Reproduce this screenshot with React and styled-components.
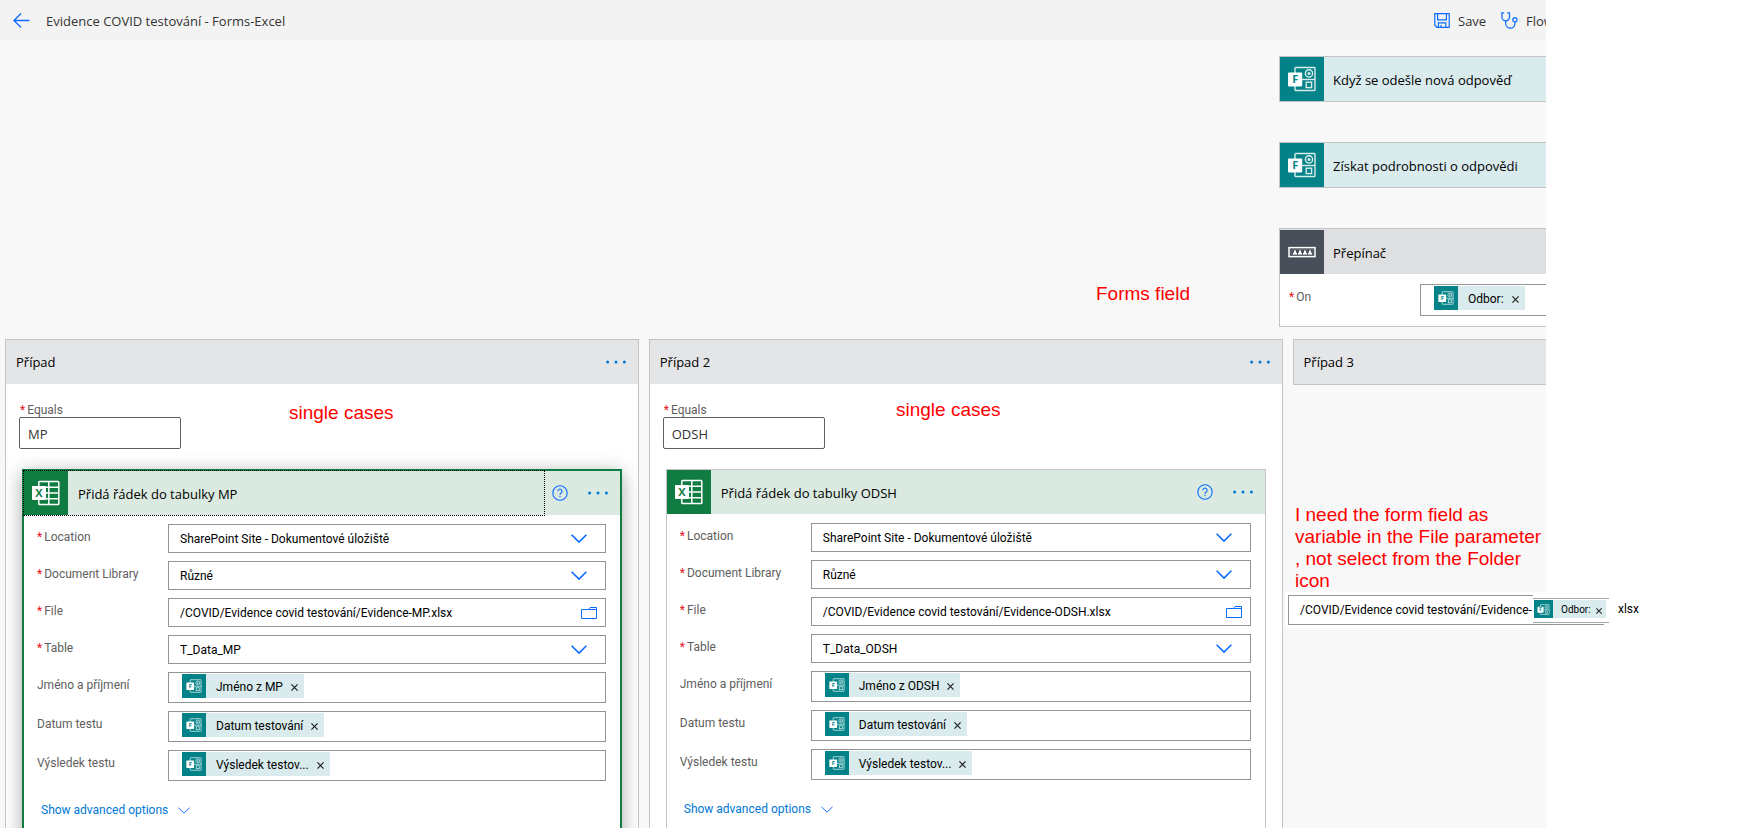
import React, { useState } from "react";
import styled, { createGlobalStyle, css } from "styled-components";

const color = {
  toolbar: "#f3f3f3",
  canvas: "#f8f8f8",
  line: "#c4c4c4",
  field: "#949494",
  text: "#000000",
  label: "#605e5c",
  blue: "#0a6cff",
  link: "#0078d4",
  teal: "#038387",
  tealLight: "#d9ebed",
  green: "#107c41",
  greenLight: "#dbeae0",
};

const cases = [
  {
    id: "mp",
    title: "Případ",
    value: "MP",
    action: "Přidá řádek do tabulky MP",
    file: "/COVID/Evidence covid testování/Evidence-MP.xlsx",
    table: "T_Data_MP",
    person: "Jméno z MP",
    selected: true,
  },
  {
    id: "odsh",
    title: "Případ 2",
    value: "ODSH",
    action: "Přidá řádek do tabulky ODSH",
    file: "/COVID/Evidence covid testování/Evidence-ODSH.xlsx",
    table: "T_Data_ODSH",
    person: "Jméno z ODSH",
    selected: false,
  },
];

const notes = [
  { id: 1, left: 1096, top: 283, text: "Forms field" },
  { id: 2, left: 289, top: 402, text: "single cases" },
  { id: 3, left: 896, top: 399, text: "single cases" },
  {
    id: 4,
    left: 1295,
    top: 504,
    text: "I need the form field as\nvariable in the File parameter\n, not select from the Folder\nicon",
  },
];

/* icons */
const FormsIcon = ({ size = 44 }) => (
  <svg width={size} height={size} viewBox="0 0 44 44" aria-hidden="true">
    <g fill="none" stroke="#d7ecec" strokeWidth="1.4">
      <rect x="15" y="10.5" width="20" height="23" rx="0.8" />
      <path d="M22 22.5h13" />
      <circle cx="29" cy="16.4" r="3.6" />
      <rect x="26.2" y="25.2" width="5.4" height="5.4" />
    </g>
    <circle cx="29" cy="16.4" r="1.5" fill="#d7ecec" />
    <rect x="8" y="15.4" width="14.2" height="14" rx="0.8" fill="#fff" />
    <text
      x="15.2"
      y="26.4"
      textAnchor="middle"
      fontFamily="Open Sans, sans-serif"
      fontSize="11"
      fontWeight="700"
      fill={color.teal}
    >
      F
    </text>
  </svg>
);

const ExcelIcon = () => (
  <svg width="44" height="44" viewBox="0 0 44 44" aria-hidden="true">
    <g fill="none" stroke="#fff" strokeWidth="1.5">
      <rect x="14.8" y="10.5" width="20" height="23" rx="0.8" />
      <path d="M24.8 10.5v23M14.8 16.3h20M14.8 22h20M14.8 27.7h20" />
    </g>
    <rect x="8" y="15" width="14" height="14" rx="0.8" fill="#fff" />
    <text
      x="15"
      y="26"
      textAnchor="middle"
      fontFamily="Open Sans, sans-serif"
      fontSize="11"
      fontWeight="700"
      fill={color.green}
    >
      X
    </text>
  </svg>
);

const SwitchIcon = () => (
  <svg width="44" height="44" viewBox="0 0 44 44" aria-hidden="true">
    <rect x="9" y="17.6" width="26" height="9" fill="none" stroke="#fff" strokeWidth="1.5" />
    <rect x="11" y="19.6" width="22" height="5" fill="#484f58" stroke="#7d828a" strokeWidth="0.5" />
    <path
      d="M13 24.4v-1.6h1v-2.4h2v2.4h1v1.6zM18 24.4v-1.6h1v-2.4h2v2.4h1v1.6zM23 24.4v-1.6h1v-2.4h2v2.4h1v1.6zM28 24.4v-1.6h1v-2.4h2v2.4h1v1.6z"
      fill="#fff"
    />
  </svg>
);

const BackIcon = () => (
  <svg width="17" height="15" viewBox="0 0 17 15" fill="none" stroke={color.blue} strokeWidth="1.3">
    <path d="M16.5 7.5H1M8 .5l-7 7 7 7" />
  </svg>
);

const SaveIcon = () => (
  <svg width="16" height="15" viewBox="0 0 16 15" fill="none" stroke={color.blue} strokeWidth="1.2">
    <path d="M.8.7h14.400v13.600H3L.8 12.200zM3.600.9v6h8.800v-6M4.400 14.200V9.800h7.400v4.400M7 14v-2" />
  </svg>
);

const CheckerIcon = () => (
  <svg width="17" height="17" viewBox="0 0 17 17" fill="none" stroke={color.blue} strokeWidth="1.2">
    <path d="M3.200.8H.9v4.300a3.800 3.800 0 0 0 7.600 0V.8H6.200M4.700 9v2.600a4.600 4.600 0 0 0 9.200 0V9.800" />
    <circle cx="13.900" cy="7.700" r="2.100" />
  </svg>
);

const Chevron = ({ width = 16, height = 9, thin }) => (
  <svg
    width={width}
    height={height}
    viewBox="0 0 16 9"
    fill="none"
    stroke={color.blue}
    strokeWidth={thin ? 1.3 : 1.6}
    aria-hidden="true"
  >
    <path d="M.6.8 8 8.100 15.400.8" />
  </svg>
);

const FolderIcon = () => (
  <svg width="16" height="12" viewBox="0 0 16 12" fill="none" stroke={color.blue} aria-hidden="true">
    <path d="M.5 2.500h7l1.600-2h6.400v11H.5zM7.500 2.500h8" />
  </svg>
);

const HelpIcon = () => (
  <svg width="16" height="16" viewBox="0 0 16 16" fill="none" stroke={color.blue} strokeWidth="1.1">
    <circle cx="8" cy="8" r="7.2" />
    <path d="M5.900 6.200a2.100 2.100 0 1 1 3.200 1.800C8.300 8.500 8 8.900 8 9.900M8 11v1.300" />
  </svg>
);

const DotsIcon = () => (
  <svg width="20" height="4" viewBox="0 0 20 4" fill={color.link}>
    <circle cx="1.6" cy="2" r="1.5" />
    <circle cx="10" cy="2" r="1.5" />
    <circle cx="18.4" cy="2" r="1.5" />
  </svg>
);

const CloseIcon = ({ size }) => (
  <svg width={size} height={size} viewBox="0 0 7 7" fill="none" stroke="#222" strokeWidth="1.2">
    <path d="M.4.4l6.200 6.200M6.600.4.4 6.600" />
  </svg>
);

/* pieces */
const DynamicToken = ({ label, small }) => (
  <Token small={small}>
    <TokenIcon>
      <FormsIcon size={small ? 19 : 24} />
    </TokenIcon>
    <span className="name">{label}</span>
    <button type="button" aria-label={`Remove ${label}`}>
      <CloseIcon size={small ? 6 : 7} />
    </button>
  </Token>
);

const SelectField = ({ id, label, value }) => (
  <Row>
    <Label htmlFor={id} required>
      {label}
    </Label>
    <SelectBox>
      <select id={id} defaultValue={value}>
        <option>{value}</option>
      </select>
      <Chevron />
    </SelectBox>
  </Row>
);

const TokenField = ({ label, token }) => (
  <Row>
    <Label as="span">{label}</Label>
    <TokenBox role="group" aria-label={label}>
      <DynamicToken label={token} />
    </TokenBox>
  </Row>
);

const ActionForm = ({ data }) => {
  const [file, setFile] = useState(data.file);

  return (
    <Form onSubmit={(e) => e.preventDefault()}>
      <SelectField
        id={`${data.id}-location`}
        label="Location"
        value="SharePoint Site - Dokumentové úložiště"
      />
      <SelectField id={`${data.id}-library`} label="Document Library" value="Různé" />
      <Row>
        <Label htmlFor={`${data.id}-file`} required>
          File
        </Label>
        <FileBox>
          <input
            id={`${data.id}-file`}
            type="text"
            value={file}
            onChange={(e) => setFile(e.target.value)}
          />
          <button type="button" aria-label="Browse">
            <FolderIcon />
          </button>
        </FileBox>
      </Row>
      <SelectField id={`${data.id}-table`} label="Table" value={data.table} />
      <TokenField label="Jméno a příjmení" token={data.person} />
      <TokenField label="Datum testu" token="Datum testování" />
      <TokenField label="Výsledek testu" token="Výsledek testov..." />
      <Advanced type="button">
        Show advanced options
        <Chevron width={12} height={7} thin />
      </Advanced>
    </Form>
  );
};

const Case = ({ data }) => (
  <CaseCard>
    <CaseHeader>
      <h2>{data.title}</h2>
      <IconButton type="button" aria-label="More">
        <DotsIcon />
      </IconButton>
    </CaseHeader>
    <CaseBody>
      <Equals>
        <label htmlFor={`${data.id}-equals`}>Equals</label>
        <input id={`${data.id}-equals`} type="text" defaultValue={data.value} />
      </Equals>
      <ActionCard selected={data.selected}>
        <ActionHeader>
          <ActionTitle type="button" selected={data.selected}>
            <ExcelIcon />
            <span>{data.action}</span>
          </ActionTitle>
          <IconButton type="button" aria-label="Help">
            <HelpIcon />
          </IconButton>
          <IconButton type="button" aria-label="More">
            <DotsIcon />
          </IconButton>
        </ActionHeader>
        <ActionForm data={data} />
      </ActionCard>
    </CaseBody>
  </CaseCard>
);

const App = () => {
  return (
    <Page>
      <GlobalStyle />
      <Designer>
        <Toolbar>
          <button type="button" aria-label="Back" className="back">
            <BackIcon />
          </button>
          <h1>Evidence COVID testování - Forms-Excel</h1>
          <Command type="button">
            <SaveIcon />
            <span>Save</span>
          </Command>
          <Command type="button" last>
            <CheckerIcon />
            <span>Flow</span>
          </Command>
        </Toolbar>

        <Steps>
          <Step>
            <StepHeader>
              <FormsIcon />
              <span>Když se odešle nová odpověď</span>
            </StepHeader>
          </Step>
          <Step>
            <StepHeader>
              <FormsIcon />
              <span>Získat podrobnosti o odpovědi</span>
            </StepHeader>
          </Step>
          <Step control>
            <StepHeader control>
              <SwitchIcon />
              <span>Přepínač</span>
            </StepHeader>
            <SwitchBody>
              <Label as="span" required>
                On
              </Label>
              <TokenBox open role="group" aria-label="On">
                <DynamicToken label="Odbor:" />
              </TokenBox>
            </SwitchBody>
          </Step>
        </Steps>

        <Cases>
          {cases.map((item) => (
            <Case key={item.id} data={item} />
          ))}
          <CaseCard collapsed>
            <CaseHeader>
              <h2>Případ 3</h2>
            </CaseHeader>
          </CaseCard>
        </Cases>
      </Designer>

      {notes.map((note) => (
        <Note key={note.id} left={note.left} top={note.top}>
          {note.text}
        </Note>
      ))}
      <Sample>
        <div className="path">/COVID/Evidence covid testování/Evidence-</div>
        <div className="tail">
          <div className="patch">
            <DynamicToken label="Odbor:" small />
          </div>
        </div>
        <span className="ext">xlsx</span>
      </Sample>
    </Page>
  );
};

const GlobalStyle = createGlobalStyle`
  * {
    box-sizing: border-box;
  }

  body {
    margin: 0;
    background-color: #fff;
    color: ${color.text};
    font-family: Roboto, "Noto Sans", sans-serif;
    font-size: 12px;
  }

  h1,
  h2 {
    margin: 0;
    font-weight: 400;
  }

  button {
    padding: 0;
    border: none;
    background: none;
    color: inherit;
    font: inherit;
    cursor: pointer;
  }

  input,
  select {
    color: inherit;
    font: inherit;
  }

  svg {
    display: block;
    flex: none;
  }
`;

const titleFont = css`
  font-family: "Open Sans", "Noto Sans", sans-serif;
  font-size: 13px;
`;

const Page = styled.div`
  position: relative;
  display: flex;
  height: 100vh;
  padding-right: 192px;
  overflow: hidden;
`;

const Designer = styled.main`
  display: flex;
  flex: 1;
  flex-direction: column;
  min-width: 0;
  overflow: hidden;
  background-color: ${color.canvas};
`;

const Toolbar = styled.header`
  display: flex;
  flex: none;
  align-items: center;
  height: 40px;
  padding-left: 13px;
  background-color: ${color.toolbar};
  color: #333;
  ${titleFont}

  h1 {
    flex: 1;
    margin-left: 16px;
    padding-top: 2px;
    font-size: 13px;
    line-height: 20px;
  }
`;

const Command = styled.button.withConfig({
  shouldForwardProp: (prop) => prop !== "last",
})`
  display: flex;
  align-items: center;
  gap: 8px;
  width: ${(props) => (props.last ? "45px" : "67px")};
  line-height: 20px;
  white-space: nowrap;

  span {
    padding-top: 2px;
  }
`;

const Steps = styled.section`
  display: flex;
  flex: none;
  flex-direction: column;
  align-self: flex-end;
  gap: 40px;
  width: 267px;
  padding-top: 16px;
`;

const Step = styled.article.withConfig({
  shouldForwardProp: (prop) => prop !== "control",
})`
  padding-top: ${(props) => (props.control ? "1px" : "0")};
  border: 1px solid ${color.line};
  border-right: none;
  background-color: ${(props) => (props.control ? "#dedfe1" : color.tealLight)};
`;

const StepHeader = styled.div.withConfig({
  shouldForwardProp: (prop) => prop !== "control",
})`
  display: flex;
  align-items: center;
  gap: 9px;
  height: 44px;
  ${titleFont}
  white-space: nowrap;

  span {
    padding-top: 1px;
  }

  svg {
    background-color: ${(props) => (props.control ? "#484f58" : color.teal)};
  }
`;

const Label = styled.label.withConfig({
  shouldForwardProp: (prop) => prop !== "required",
})`
  flex: none;
  width: 131px;
  color: ${color.label};
  line-height: 26px;

  ${(props) =>
    props.required &&
    css`
      &::before {
        content: "*";
        margin-right: 2px;
        color: #e81123;
      }
    `}
`;

const SwitchBody = styled.div`
  display: flex;
  height: 52px;
  padding: 10px 0 0 9px;
  background-color: #fff;
`;

const TokenBox = styled.div.withConfig({
  shouldForwardProp: (prop) => prop !== "open",
})`
  display: flex;
  flex: 1;
  align-items: flex-start;
  height: ${(props) => (props.open ? "32px" : "31px")};
  padding: 1px 13px;
  border: 1px solid ${color.field};
  border-right-width: ${(props) => (props.open ? "0" : "1px")};
  background-color: #fff;
`;

const Token = styled.span.withConfig({
  shouldForwardProp: (prop) => prop !== "small",
})`
  display: inline-flex;
  align-items: center;
  height: ${(props) => (props.small ? "18px" : "24px")};
  padding-right: ${(props) => (props.small ? "4px" : "6px")};
  background-color: ${color.tealLight};
  font-size: ${(props) => (props.small ? "10px" : "12px")};
  white-space: nowrap;

  .name {
    padding: 1px ${(props) => (props.small ? "5px 0 8px" : "8px 0 10px")};
  }

  button {
    padding-top: 3px;
  }
`;

const TokenIcon = styled.span`
  display: flex;
  align-items: center;
  height: 100%;
  background-color: ${color.teal};
`;

const Cases = styled.section`
  display: grid;
  flex: 1 0 auto;
  grid-template-columns: 5fr 5fr 2fr;
  gap: 10px;
  padding: 12px 0 0 5px;
`;

const CaseCard = styled.article.withConfig({
  shouldForwardProp: (prop) => prop !== "collapsed",
})`
  align-self: ${(props) => (props.collapsed ? "start" : "stretch")};
  min-width: 0;
  border: 1px solid ${color.line};
  border-right-width: ${(props) => (props.collapsed ? "0" : "1px")};
  background-color: #fff;
  overflow: hidden;
`;

const CaseHeader = styled.div`
  display: flex;
  align-items: center;
  justify-content: space-between;
  height: 44px;
  padding: 0 12px 0 10px;
  background-color: #e4e5e7;

  h2 {
    ${titleFont}
  }
`;

const CaseBody = styled.div`
  padding: 18px 16px 0;
`;

const IconButton = styled.button`
  display: flex;
  align-items: center;
  justify-content: center;
`;

const Equals = styled.div`
  display: flex;
  flex-direction: column;
  width: 162px;
  margin: 0 0 20px -3px;

  label {
    padding-top: 1px;
    color: ${color.label};
    line-height: 14px;

    &::before {
      content: "*";
      margin: 0 2px 0 1px;
      color: #e81123;
    }
  }

  input {
    height: 32px;
    padding: 1px 8px 0;
    border: 1px solid ${color.label};
    border-radius: 2px;
    color: #333;
    ${titleFont}
  }
`;

const ActionCard = styled.div.withConfig({
  shouldForwardProp: (prop) => prop !== "selected",
})`
  border: 1px solid ${color.line};
  background-color: #fff;

  ${(props) =>
    props.selected &&
    css`
      border: 2px solid ${color.green};
      box-shadow: 0 4px 18px rgba(0, 0, 0, 0.35);
    `}
`;

const ActionHeader = styled.div`
  display: flex;
  height: 44px;
  padding-right: 12px;
  background-color: ${color.greenLight};

  ${IconButton} + ${IconButton} {
    margin-left: 20px;
  }
`;

const ActionTitle = styled.button.withConfig({
  shouldForwardProp: (prop) => prop !== "selected",
})`
  display: flex;
  flex: 1;
  align-items: center;
  gap: 10px;
  margin-right: 8px;
  outline: ${(props) => (props.selected ? "1px dotted #000" : "none")};
  text-align: left;

  span {
    padding-top: 2px;
    ${titleFont}
  }

  svg {
    background-color: ${color.green};
  }
`;

const Form = styled.form`
  display: flex;
  flex-direction: column;
  gap: 8px;
  padding: 9px 14px 40px 13px;
`;

const Row = styled.div`
  display: flex;
  align-items: flex-start;
`;

const SelectBox = styled.div`
  display: grid;
  flex: 1;
  align-items: center;
  height: 29px;
  border: 1px solid ${color.field};

  select,
  svg {
    grid-area: 1 / 1;
  }

  select {
    width: 100%;
    height: 27px;
    padding: 0 40px 0 11px;
    border: none;
    background: none;
    appearance: none;
  }

  svg {
    justify-self: end;
    margin-right: 18px;
    pointer-events: none;
  }
`;

const FileBox = styled.div`
  display: flex;
  flex: 1;
  align-items: center;
  height: 29px;
  padding: 0 8px 0 11px;
  border: 1px solid ${color.field};

  input {
    flex: 1;
    min-width: 0;
    padding: 0;
    border: none;
    outline: none;
    background: none;
  }
`;

const Advanced = styled.button`
  display: flex;
  align-items: center;
  align-self: flex-start;
  gap: 10px;
  margin: 12px 0 0 4px;
  color: ${color.link};
  line-height: 18px;
`;

/* red remarks lie over the designer */
const Note = styled.p`
  position: absolute;
  left: ${(props) => props.left}px;
  top: ${(props) => props.top}px;
  margin: 0;
  color: #ff0000;
  font-family: "Liberation Sans", Arial, sans-serif;
  font-size: 19px;
  line-height: 22px;
  white-space: pre;
`;

const Sample = styled.div`
  position: absolute;
  left: 1285px;
  top: 592px;
  display: flex;
  height: 36px;
  padding: 3px;
  background-color: #fff;
  line-height: 28px;
  white-space: nowrap;

  .path {
    width: 245px;
    height: 30px;
    padding-left: 11px;
    border: 1px solid ${color.field};
    border-right: none;
  }

  .tail {
    width: 71px;
    height: 30px;
    padding-top: 3px;
    border-bottom: 1px solid ${color.field};
  }

  .patch {
    display: flex;
    align-items: flex-start;
    width: 76px;
    height: 25px;
    padding: 1px 0 0 1px;
    border: solid #a8a8a8;
    border-width: 1px 0;
    background-color: #fff;
  }

  .ext {
    margin-left: 14px;
  }
`;

export default App;
